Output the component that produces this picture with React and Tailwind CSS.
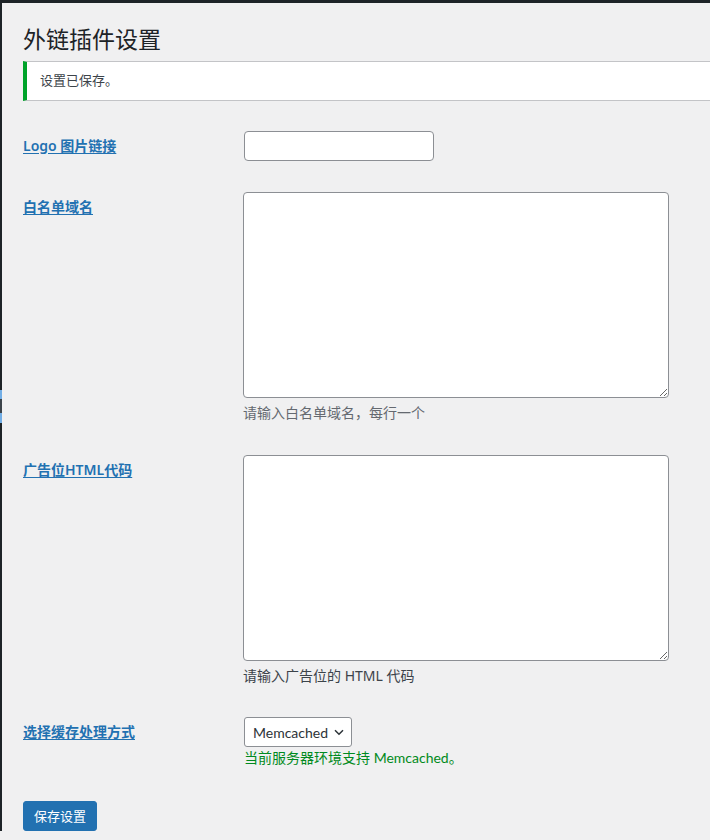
import React from "react";

function Row({ label, children, pb = "pb-[16px]" }) {
  return (
    <div className="flex">
      <div className="w-[220px] shrink-0 pt-[17px]">
        <span className="text-[14px] leading-[20px] font-semibold text-[#2271b1] underline underline-offset-2">
          {label}
        </span>
      </div>
      <div className={`pt-[15px] ${pb}`}>{children}</div>
    </div>
  );
}

export default function App() {
  return (
    <div className="min-h-[840px] bg-[#f0f0f1] font-['Noto_Sans','Noto_Sans_CJK_SC',sans-serif] text-[#3c434a] overflow-hidden">
      <div className="h-[3px] bg-[#1d2327]" />
      <div className="flex">
        <div className="w-[2px] shrink-0 flex flex-col">
          <div className="h-[387px] bg-[#1d2327]" />
          <div className="h-[9px] bg-[#72aee6]" />
          <div className="h-[14px] bg-[#3c434a]" />
          <div className="h-[10px] bg-[#72aee6]" />
          <div className="flex-1 bg-[#1d2327]" />
        </div>
        <div className="flex-1 pl-[21px]">
          <h1 className="mt-[21px] h-[30px] text-[23px] leading-[30px] font-normal text-[#1d2327]">
            外链插件设置
          </h1>
          <div className="mt-[7px] h-[40px] bg-white border-y border-[#c3c4c7] border-l-4 border-l-[#00a32a] pl-[13px] flex items-center text-[13px] text-[#3c434a]">
            设置已保存。
          </div>

          <div className="mt-[15px]">
            <Row label="Logo 图片链接">
              <input
                type="text"
                className="block w-[190px] h-[30px] ml-[1px] bg-white border border-[#8c8f94] rounded-[4px] px-2 text-[14px] outline-none"
              />
            </Row>
            <Row label="白名单域名" pb="pb-[17px]">
              <textarea className="block w-[426px] h-[206px] bg-white border border-[#8c8f94] rounded-[4px] outline-none" />
              <p className="mt-[5px] text-[14px] leading-[20px] text-[#646970]">
                请输入白名单域名，每行一个
              </p>
            </Row>
            <Row label="广告位HTML代码">
              <textarea className="block w-[426px] h-[206px] bg-white border border-[#8c8f94] rounded-[4px] outline-none" />
              <p className="mt-[5px] text-[14px] leading-[20px] text-[#3c434a]">
                请输入广告位的 HTML 代码
              </p>
            </Row>
            <Row label="选择缓存处理方式" pb="pb-[15px]">
              <div className="relative w-[108px] h-[30px] ml-[1px]">
                <select className="appearance-none w-full h-full bg-white border border-[#8c8f94] rounded-[3px] pl-[8px] pr-[20px] text-[14px] font-['Lato','Noto_Sans',sans-serif] text-[#2c3338] outline-none">
                  <option>Memcached</option>
                </select>
                <svg
                  className="absolute right-[8px] top-[12px] pointer-events-none"
                  width="10"
                  height="7"
                  viewBox="0 0 10 7"
                  fill="none"
                >
                  <path d="M1 1.2L5 5.2L9 1.2" stroke="#2c3338" strokeWidth="1.5" />
                </svg>
              </div>
              <p className="mt-[1px] text-[14px] leading-[20px] text-[#008a20] ml-[1px]">
                当前服务器环境支持 <span className="font-['Lato','Noto_Sans',sans-serif]">Memcached</span>。
              </p>
            </Row>
          </div>

          <div className="mt-[18px]">
            <button className="h-[30px] px-[10px] bg-[#2271b1] text-white text-[13px] leading-[28px] rounded-[3px] border border-[#2271b1]">
              保存设置
            </button>
          </div>
        </div>
      </div>
    </div>
  );
}
